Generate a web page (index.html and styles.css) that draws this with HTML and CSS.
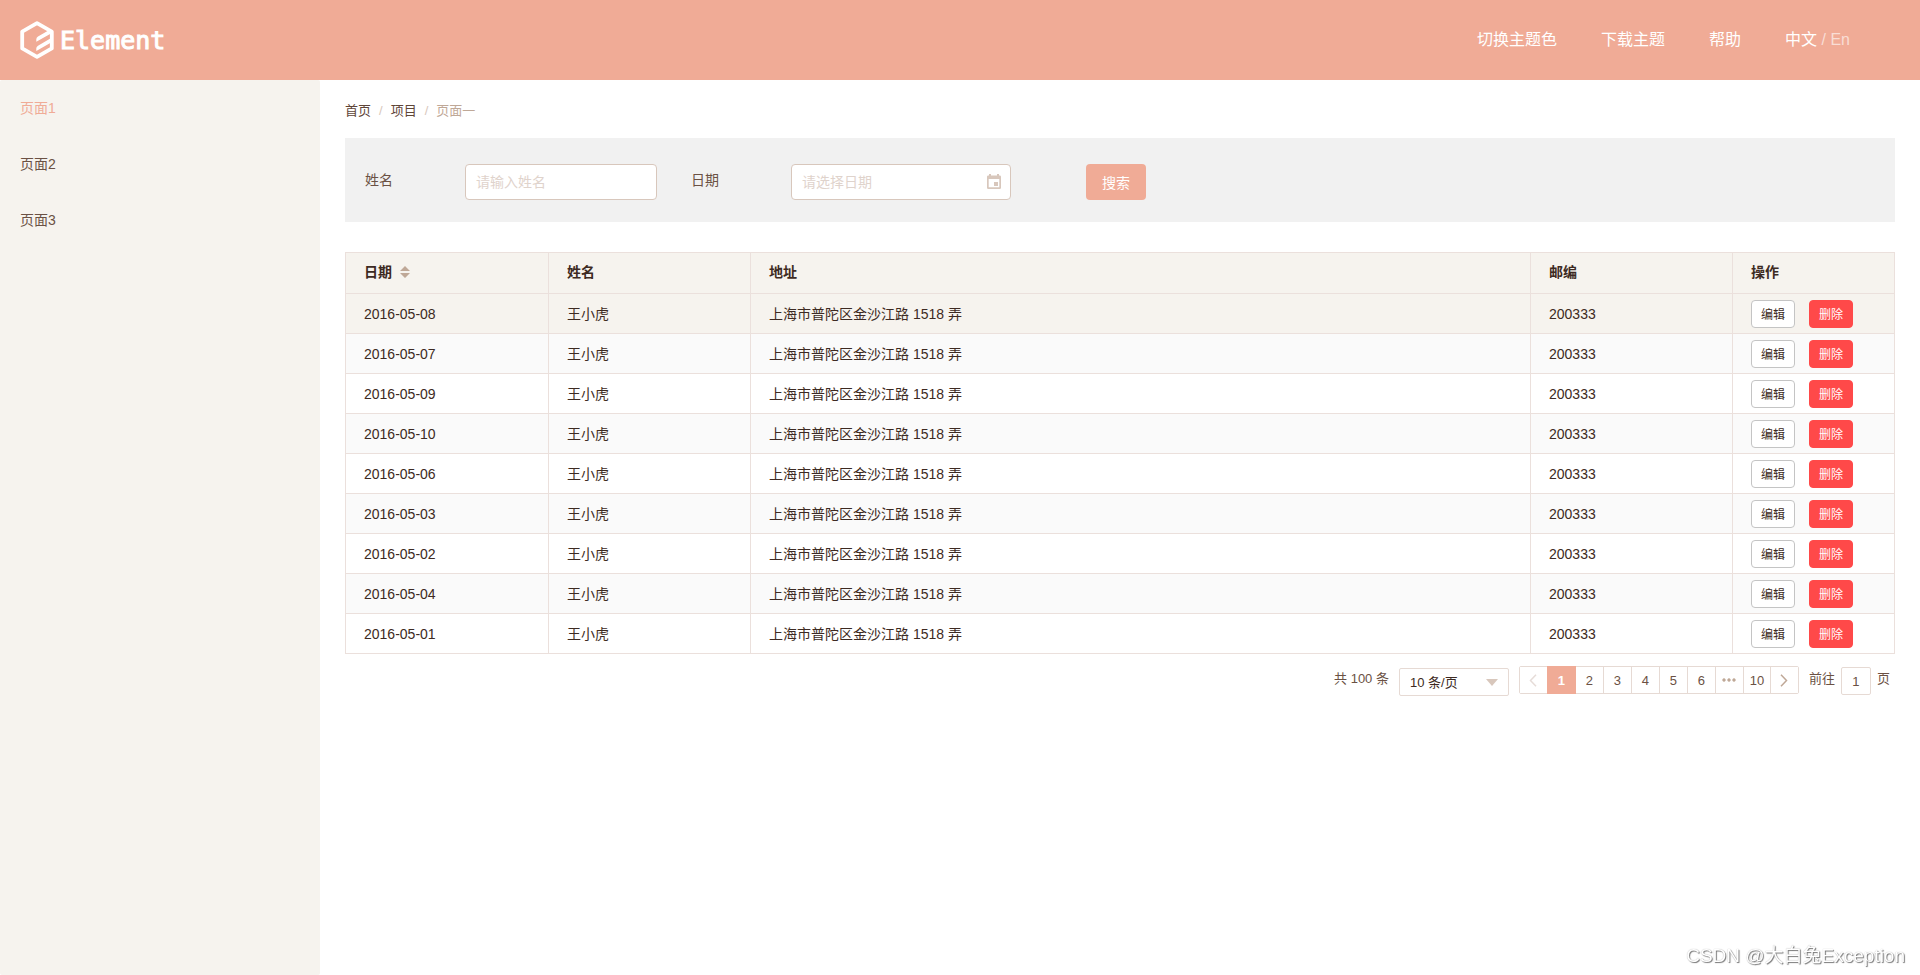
FILE: index.html
```html
<!DOCTYPE html>
<html lang="zh-CN">
<head>
<meta charset="utf-8">
<title>Element</title>
<link rel="stylesheet" href="styles.css">
</head>
<body>
<header class="header">
  <a class="logo" href="#">
    <svg class="logo-mark" viewBox="0 0 34 38" aria-hidden="true">
      <path d="M17 2.2 31.8 10.6V27.4L17 35.8 2.2 27.4V10.6Z" fill="none" stroke="#fff" stroke-width="3.8" stroke-linejoin="round"/>
      <path d="M16.3 20.7V18.3Q16.3 16.6 18 15.6L31 8V12.4ZM16.3 30V27.2Q16.3 25.7 18 24.7L32 16.5V21Z" fill="#fff"/>
    </svg>
    <span class="logo-name">Element</span>
  </a>
  <nav class="header-nav">
    <a href="#">切换主题色</a>
    <a href="#">下载主题</a>
    <a href="#">帮助</a>
    <span class="lang"><a href="#">中文</a> / <a class="lang-off" href="#">En</a></span>
  </nav>
</header>
<div class="layout">
  <aside class="sidebar">
    <a class="menu-item active" href="#">页面1</a>
    <a class="menu-item" href="#">页面2</a>
    <a class="menu-item" href="#">页面3</a>
  </aside>
  <main class="main">
    <nav class="breadcrumb">
      <a href="#">首页</a><span class="sep">/</span><a href="#">项目</a><span class="sep">/</span><span class="current">页面一</span>
    </nav>
    <form class="filter">
      <label class="filter-label" for="name">姓名</label>
      <input class="input name-input" id="name" type="text" placeholder="请输入姓名">
      <label class="filter-label" for="date">日期</label>
      <span class="date-field">
        <input class="input date-input" id="date" type="text" placeholder="请选择日期">
        <svg class="date-icon" viewBox="0 0 14 15" aria-hidden="true">
          <path d="M2 0h2v1.5h6V0h2v1.5h.7q1.3 0 1.3 1.3v10.9Q14 15 12.700 15H1.300Q0 15 0 13.700V2.800Q0 1.500 1.300 1.500H2ZM1.700 5v8.300h10.600V5ZM7 8h4v4H7Z" fill="#d8c7bc" fill-rule="evenodd"/>
        </svg>
      </span>
      <button class="search" type="button">搜索</button>
    </form>
    <table class="table">
      <colgroup><col class="c-date"><col class="c-name"><col><col class="c-zip"><col class="c-op"></colgroup>
      <thead>
        <tr>
          <th>日期<svg class="sort" viewBox="0 0 10 12" aria-hidden="true"><path d="M5 0l5 5H0ZM0 7h10l-5 5Z" fill="#bfa897"/></svg></th>
          <th>姓名</th><th>地址</th><th>邮编</th><th>操作</th>
        </tr>
      </thead>
      <tbody>
        <tr class="hover"><td>2016-05-08</td><td>王小虎</td><td>上海市普陀区金沙江路 1518 弄</td><td>200333</td><td><div class="ops"><button class="btn" type="button">编辑</button><button class="btn danger" type="button">删除</button></div></td></tr>
        <tr><td>2016-05-07</td><td>王小虎</td><td>上海市普陀区金沙江路 1518 弄</td><td>200333</td><td><div class="ops"><button class="btn" type="button">编辑</button><button class="btn danger" type="button">删除</button></div></td></tr>
        <tr><td>2016-05-09</td><td>王小虎</td><td>上海市普陀区金沙江路 1518 弄</td><td>200333</td><td><div class="ops"><button class="btn" type="button">编辑</button><button class="btn danger" type="button">删除</button></div></td></tr>
        <tr><td>2016-05-10</td><td>王小虎</td><td>上海市普陀区金沙江路 1518 弄</td><td>200333</td><td><div class="ops"><button class="btn" type="button">编辑</button><button class="btn danger" type="button">删除</button></div></td></tr>
        <tr><td>2016-05-06</td><td>王小虎</td><td>上海市普陀区金沙江路 1518 弄</td><td>200333</td><td><div class="ops"><button class="btn" type="button">编辑</button><button class="btn danger" type="button">删除</button></div></td></tr>
        <tr><td>2016-05-03</td><td>王小虎</td><td>上海市普陀区金沙江路 1518 弄</td><td>200333</td><td><div class="ops"><button class="btn" type="button">编辑</button><button class="btn danger" type="button">删除</button></div></td></tr>
        <tr><td>2016-05-02</td><td>王小虎</td><td>上海市普陀区金沙江路 1518 弄</td><td>200333</td><td><div class="ops"><button class="btn" type="button">编辑</button><button class="btn danger" type="button">删除</button></div></td></tr>
        <tr><td>2016-05-04</td><td>王小虎</td><td>上海市普陀区金沙江路 1518 弄</td><td>200333</td><td><div class="ops"><button class="btn" type="button">编辑</button><button class="btn danger" type="button">删除</button></div></td></tr>
        <tr><td>2016-05-01</td><td>王小虎</td><td>上海市普陀区金沙江路 1518 弄</td><td>200333</td><td><div class="ops"><button class="btn" type="button">编辑</button><button class="btn danger" type="button">删除</button></div></td></tr>
      </tbody>
    </table>
    <div class="pagination">
      <span class="total">共 100 条</span>
      <span class="size-field">
        <select class="size" aria-label="每页条数"><option>10 条/页</option></select>
        <svg class="caret" viewBox="0 0 12 7" aria-hidden="true"><path d="M0 0h12L6 7Z" fill="#d8c7bc"/></svg>
      </span>
      <div class="pager">
        <button type="button" aria-label="上一页" disabled><svg viewBox="0 0 8 13" aria-hidden="true"><path d="M7 .7 1.500 6.500 7 12.300" fill="none" stroke="#e6dcd8" stroke-width="1.500"/></svg></button>
        <button class="on" type="button">1</button>
        <button type="button">2</button>
        <button type="button">3</button>
        <button type="button">4</button>
        <button type="button">5</button>
        <button type="button">6</button>
        <button type="button" aria-label="更多"><svg class="dots" viewBox="0 0 14 4" aria-hidden="true"><path d="M2 .3a1.700 1.700 0 1 0 .01 0ZM7 .3a1.700 1.700 0 1 0 .01 0ZM12 .3a1.700 1.700 0 1 0 .01 0Z" fill="#bfa897"/></svg></button>
        <button type="button">10</button>
        <button type="button" aria-label="下一页"><svg viewBox="0 0 8 13" aria-hidden="true"><path d="M1 .7 6.500 6.500 1 12.300" fill="none" stroke="#bfa897" stroke-width="1.500"/></svg></button>
      </div>
      <label class="jump">前往<input class="jump-input" type="text" value="1">页</label>
    </div>
  </main>
</div>
<div class="watermark">CSDN @大白兔Exception</div>
</body>
</html>
```
FILE: styles.css
```css
* { box-sizing: border-box; }
body {
  margin: 0;
  min-height: 100vh;
  display: flex;
  flex-direction: column;
  background: #fff;
  color: #3d2a22;
  font-family: "Liberation Sans", "Noto Sans CJK SC", sans-serif;
  font-size: 14px;
}
a { color: inherit; text-decoration: none; }
button, input, select { font-family: inherit; margin: 0; }

.header {
  height: 80px;
  padding: 0 70px 0 20px;
  display: flex;
  align-items: center;
  justify-content: space-between;
  background: #f0ab96;
  color: #fff;
}
.logo { display: flex; align-items: center; gap: 6px; }
.logo-mark { width: 34px; height: 38px; }
.logo-name {
  padding-top: 2px;
  font-family: "DejaVu Sans Mono", monospace;
  font-size: 25px;
  line-height: 38px;
  -webkit-text-stroke: 1px #fff;
}
.header-nav { display: flex; gap: 44px; font-size: 16px; line-height: 24px; }
.lang { color: #f9ddd5; }
.lang a:first-child { color: #fff; }

.layout { flex: 1; display: flex; }
.sidebar {
  flex: 0 0 320px;
  background: #f6f3ee;
  border-radius: 2px;
}
.menu-item {
  display: block;
  height: 56px;
  padding-left: 20px;
  line-height: 56px;
  color: #6b5144;
}
.menu-item.active { color: #f0ab96; }

.main { flex: 1; min-width: 0; padding: 21px 25px; }
.breadcrumb {
  margin-bottom: 17px;
  font-size: 13px;
  line-height: 20px;
  color: #5e4538;
}
.sep { margin: 0 8px; color: #d8c7bc; }
.current { color: #bfa897; }

.filter {
  padding: 26px 20px 22px;
  display: flex;
  background: #f1f1f1;
}
.filter-label { width: 100px; line-height: 32px; color: #6b5144; }
.input {
  height: 36px;
  padding: 0 10px;
  border: 1px solid #d8c7bc;
  border-radius: 4px;
  background: #fff;
  font-size: 14px;
}
.input::placeholder { color: #dfd3cc; opacity: 1; }
.name-input { width: 192px; margin-right: 34px; }
.date-field { position: relative; }
.date-input { width: 220px; display: block; }
.date-icon { position: absolute; right: 10px; top: 10px; width: 14px; height: 15px; }
.search {
  width: 60px;
  height: 36px;
  margin-left: 75px;
  padding: 0;
  border: 0;
  border-radius: 4px;
  background: #f0ab96;
  color: #fff;
  font-size: 14px;
}

.table {
  width: 100%;
  margin-top: 30px;
  border-collapse: collapse;
  table-layout: fixed;
}
.c-date { width: 203px; }
.c-name, .c-zip { width: 202px; }
.c-op { width: 162px; }
.table th, .table td {
  height: 40px;
  padding: 0 18px;
  border: 1px solid #ebe0dc;
  line-height: 20px;
  text-align: left;
}
.table th { height: 41px; padding-bottom: 2px; background: #f6f3ee; font-weight: bold; }
.table tbody tr:nth-child(even) { background: #fafafa; }
.table .hover { background: #f6f3ee; }
.sort { width: 10px; height: 12px; margin-left: 8px; vertical-align: -1px; }
.ops { display: flex; gap: 14px; }
.btn {
  width: 44px;
  height: 28px;
  padding: 0;
  border: 1px solid #c4c4c4;
  border-radius: 4px;
  background: #fff;
  color: #3d2a22;
  font-size: 12px;
}
.danger { border-color: #ff4949; background: #ff4949; color: #fff; }

.pagination {
  margin-top: 12px;
  padding-right: 5px;
  display: flex;
  justify-content: flex-end;
  align-items: flex-start;
  gap: 10px;
  font-size: 13px;
  line-height: 26px;
  color: #6b5144;
}
.size-field { position: relative; padding-top: 2px; }
.size {
  display: block;
  width: 110px;
  height: 28px;
  padding: 0 10px;
  appearance: none;
  border: 1px solid #e6dad4;
  border-radius: 2px;
  background: #fff;
  color: #3d2a22;
  font-size: 13px;
}
.caret { position: absolute; right: 11px; top: 13px; width: 12px; height: 7px; }
.pager {
  display: flex;
  border: 1px solid #e6dad4;
  border-radius: 2px;
}
.pager button {
  width: 28px;
  height: 26px;
  padding: 0;
  display: grid;
  place-items: center;
  border: 0;
  border-right: 1px solid #e6dad4;
  background: #fff;
  color: #6b5144;
  font-size: 13px;
}
.pager button:first-child, .pager button:last-child { width: 27px; border-right: 0; }
.pager .on { width: 29px; height: 28px; margin: -1px 0; border: 0; background: #f0ab96; color: #fff; font-weight: bold; }
.pager button:nth-last-child(2) { width: 27px; }
.pager svg { width: 8px; height: 13px; }
.pager .dots { width: 14px; height: 4px; }
.jump { display: flex; gap: 6px; }
.jump-input {
  width: 30px;
  height: 28px;
  margin-top: 1px;
  padding: 0;
  border: 1px solid #e6dad4;
  border-radius: 2px;
  text-align: center;
  color: #6b5144;
  font-size: 13px;
}

.watermark {
  position: fixed;
  right: 15px;
  bottom: 7px;
  color: #fff;
  font-size: 19px;
  line-height: 24px;
  text-shadow: 1px 1px 1px #777, 0 0 1px #aaa;
}
```
